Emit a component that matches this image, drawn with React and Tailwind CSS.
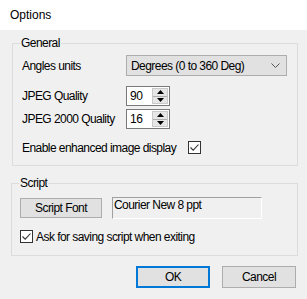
import React from "react";

const font = { fontFamily: '"Liberation Sans", Arial, sans-serif' };

function Spin({ value }) {
  return (
    <div className="flex h-[20px] w-[44px] border border-[#7a7a7a] bg-white">
      <div className="flex-1 pl-[3px] text-[12px] leading-[18px] tracking-[-0.3px] text-black">{value}</div>
      <div className="my-[1px] mr-[1px] flex w-[16px] flex-col border border-[#c9c9c9] bg-[#e6e6e6]">
        <div className="flex flex-1 items-center justify-center border-b border-[#adadad]">
          <svg width="7" height="4" viewBox="0 0 7 4"><path d="M3.5 0 L7 4 L0 4 Z" fill="#000" /></svg>
        </div>
        <div className="flex flex-1 items-center justify-center">
          <svg width="7" height="4" viewBox="0 0 7 4"><path d="M0 0 L7 0 L3.5 4 Z" fill="#000" /></svg>
        </div>
      </div>
    </div>
  );
}

function Check() {
  return (
    <div className="flex h-[13px] w-[13px] shrink-0 items-center justify-center border border-[#333333] bg-white">
      <svg width="11" height="11" viewBox="0 0 11 11">
        <path d="M1.5 5.5 L4.2 8.2 L9.5 2.5" fill="none" stroke="#333333" strokeWidth="1.1" />
      </svg>
    </div>
  );
}

export default function App() {
  return (
    <div className="h-[299px] w-[307px] overflow-hidden whitespace-nowrap bg-[#f0f0f0] text-[12px] tracking-[-0.55px] text-black" style={font}>
      <div className="flex h-[30px] items-center bg-white pl-[10px] text-[12px] tracking-normal">Options</div>

      <div className="flex flex-col pt-[6px]">
        <fieldset className="ml-[12px] mr-[9px] border border-[#dcdcdc] px-[8px] pb-[11px]">
          <legend className="ml-[-1px] px-[1px] leading-[14px]">General</legend>
          <div className="mt-[5px] flex h-[21px] items-center">
            <div className="w-[105px] pl-[1px]">Angles units</div>
            <div className="flex h-[21px] w-[161px] items-center justify-between border border-[#adadad] bg-[#e1e1e1] pl-[4px] pr-[6px]">
              <span>Degrees (0 to 360 Deg)</span>
              <svg width="9" height="5" viewBox="0 0 9 5"><path d="M0.5 0.5 L4.5 4.5 L8.5 0.5" fill="none" stroke="#555" strokeWidth="1" /></svg>
            </div>
          </div>
          <div className="mt-[10px] flex h-[20px] items-center">
            <div className="w-[105px] pl-[1px]">JPEG Quality</div>
            <Spin value="90" />
          </div>
          <div className="mt-[3px] flex h-[20px] items-center">
            <div className="w-[105px] pl-[1px]">JPEG 2000 Quality</div>
            <Spin value="16" />
          </div>
          <div className="mt-[12px] flex h-[13px] items-center">
            <div className="w-[167px] pl-[1px]">Enable enhanced image display</div>
            <Check />
          </div>
        </fieldset>

        <fieldset className="ml-[11px] mr-[9px] mt-[10px] border border-[#dcdcdc] px-[8px] pb-[12px]">
          <legend className="ml-[-1px] px-[1px] leading-[14px]">Script</legend>
          <div className="mt-[7px] flex h-[22px] items-center">
            <div className="flex h-[20px] w-[82px] items-center justify-center border border-[#adadad] bg-[#e1e1e1]">Script Font</div>
            <div className="ml-[10px] h-[22px] w-[150px] border border-b-white border-l-[#a0a0a0] border-r-white border-t-[#a0a0a0] pl-[1px] leading-[14px]">Courier New 8 ppt</div>
          </div>
          <div className="mt-[11px] flex h-[13px] items-center">
            <Check />
            <span className="ml-[3px]">Ask for saving script when exiting</span>
          </div>
        </fieldset>

        <div className="mt-[10px] flex justify-end gap-[12px] pr-[11px]">
          <div className="flex h-[22px] w-[74px] items-center justify-center border-2 border-[#0078d7] bg-[#e1e1e1]">OK</div>
          <div className="flex h-[22px] w-[74px] items-center justify-center border border-[#adadad] bg-[#e1e1e1]">Cancel</div>
        </div>
      </div>
    </div>
  );
}
